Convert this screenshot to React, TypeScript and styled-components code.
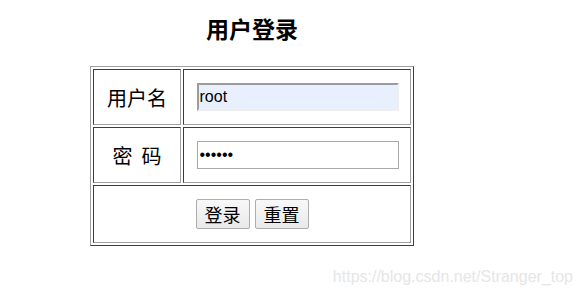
import React from "react";
import styled, { createGlobalStyle } from "styled-components";

const Global = createGlobalStyle`
  html, body { margin: 0; padding: 0; background: #fff; }
  body { font-family: "Liberation Sans", "Noto Sans CJK SC", sans-serif; color: #000; }
`;

const Page = styled.div`
  position: relative;
  width: 583px;
  height: 297px;
  overflow: hidden;
`;

const Form = styled.form`
  display: flex;
  flex-direction: column;
  align-items: center;
  width: 324px;
  margin: 0 0 0 90px;
  padding-top: 13px;
`;

const Title = styled.h2`
  margin: 0 0 23px 0;
  font-family: "Noto Sans CJK SC", sans-serif;
  font-size: 23px;
  font-weight: 700;
  line-height: 30px;
  letter-spacing: 0;
`;

const LIGHT = "#a0a0a0";
const DARK = "#3c3c3c";

const Grid = styled.div`
  box-sizing: border-box;
  width: 324px;
  display: grid;
  grid-template-columns: 88px 228px;
  grid-template-rows: 56px 56px 58px;
  gap: 2px;
  padding: 2px;
  border: 1px solid;
  border-color: ${LIGHT} ${DARK} ${DARK} ${LIGHT};
`;

const Cell = styled.div<{ $span?: boolean }>`
  box-sizing: border-box;
  border: 1px solid;
  border-color: ${DARK} ${LIGHT} ${LIGHT} ${DARK};
  display: flex;
  align-items: center;
  justify-content: center;
  gap: 5px;
  grid-column: ${(p) => (p.$span ? "1 / span 2" : "auto")};
`;

const Label = styled.span`
  font-family: "Noto Sans CJK SC", sans-serif;
  font-size: 20px;
  white-space: pre;
`;

const Input = styled.input<{ $filled?: boolean }>`
  box-sizing: border-box;
  width: 202px;
  height: 28px;
  margin: 0 0 0 1px;
  font-family: "Liberation Sans", sans-serif;
  font-size: 16px;
  color: #000;
  outline: none;
  padding: ${(p) => (p.$filled ? "0 1px" : "0 2px")};
  background: ${(p) => (p.$filled ? "#e8f0fe" : "#fff")};
  border-style: solid;
  border-width: ${(p) => (p.$filled ? "2px" : "1px")};
  border-color: ${(p) =>
    p.$filled ? "#9c9c9c #eeeeee #eeeeee #9c9c9c" : "#a9a9a9"};
`;

const Button = styled.button`
  box-sizing: border-box;
  height: 30px;
  padding: 0 8px;
  font-family: "Noto Sans CJK SC", sans-serif;
  font-size: 18px;
  line-height: 1;
  color: #000;
  border: 1px solid #adadad;
  border-radius: 2px;
  background: linear-gradient(#f8f8f8, #e9e9e9);
`;

const Watermark = styled.div`
  position: absolute;
  right: 10px;
  top: 268px;
  font-family: "Liberation Sans", sans-serif;
  font-size: 16px;
  color: #e6e6e6;
  white-space: nowrap;
`;

export default function App() {
  return (
    <Page>
      <Global />
      <Form onSubmit={(e) => e.preventDefault()}>
        <Title>用户登录</Title>
        <Grid>
          <Cell>
            <Label>用户名</Label>
          </Cell>
          <Cell>
            <Input $filled type="text" defaultValue="root" />
          </Cell>
          <Cell>
            <Label>{"密\u00a0\u00a0码"}</Label>
          </Cell>
          <Cell>
            <Input type="password" defaultValue="123456" />
          </Cell>
          <Cell $span>
            <Button type="submit">登录</Button>
            <Button type="reset">重置</Button>
          </Cell>
        </Grid>
      </Form>
      <Watermark>https://blog.csdn.net/Stranger_top</Watermark>
    </Page>
  );
}
